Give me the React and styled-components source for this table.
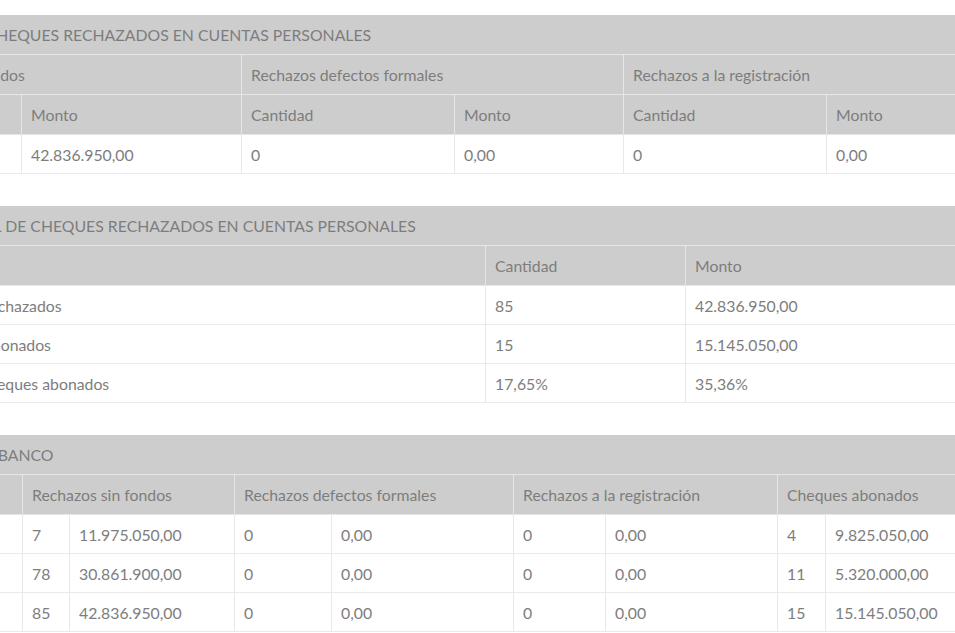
import React from "react";
import styled, { createGlobalStyle } from "styled-components";

const GlobalStyle = createGlobalStyle`
  html, body {
    margin: 0;
    padding: 0;
    background: #ffffff;
    overflow: hidden;
  }
  body {
    font-family: "Lato", "Open Sans", sans-serif;
  }
`;

// the screenshot is a crop of a wider report, so the sheet starts left of the viewport
const Sheet = styled.div`
  width: 1195px;
  margin-left: -135px;
  padding-top: 15px;
  display: flex;
  flex-direction: column;
  gap: 32px;
`;

const Table = styled.table`
  width: 100%;
  table-layout: fixed;
  border-collapse: collapse;
  font-size: 15.8px;
  color: #7d7d7d;
`;

const Col = styled.col`
  width: ${(p) => p.$w}px;
`;

const TitleCell = styled.th`
  background: #cdcdcd;
  height: 39px;
  padding: 0 9px;
  text-align: left;
  font-weight: 400;
  text-transform: uppercase;
  white-space: nowrap;
  overflow: hidden;
  border: 1px solid #e6e6e6;
  border-top: none;
`;

const HeadCell = styled.th`
  background: #cdcdcd;
  height: 39px;
  padding: 0 9px;
  text-align: left;
  font-weight: 400;
  white-space: nowrap;
  overflow: hidden;
  border: 1px solid #e6e6e6;
`;

const Cell = styled.td`
  background: #ffffff;
  height: 38px;
  padding: 0 9px;
  white-space: nowrap;
  overflow: hidden;
  border: 1px solid #e9e9e9;
`;

const Report = ({ cols, title, heads, rows }) => (
  <Table>
    <colgroup>
      {cols.map((w, i) => (
        <Col key={i} $w={w} />
      ))}
    </colgroup>
    <thead>
      <tr>
        <TitleCell colSpan={cols.length}>{title}</TitleCell>
      </tr>
      {heads.map((row, r) => (
        <tr key={r}>
          {row.map(([label, span], i) => (
            <HeadCell key={i} colSpan={span || 1}>
              {label}
            </HeadCell>
          ))}
        </tr>
      ))}
    </thead>
    <tbody>
      {rows.map((row, r) => (
        <tr key={r}>
          {row.map((v, i) => (
            <Cell key={i}>{v}</Cell>
          ))}
        </tr>
      ))}
    </tbody>
  </Table>
);

const cuentas = {
  cols: [156, 220, 213, 169, 203, 234],
  title: "Cantidad de cheques rechazados en cuentas personales",
  heads: [
    [
      ["Rechazos - sin fondos", 2],
      ["Rechazos defectos formales", 2],
      ["Rechazos a la registración", 2],
    ],
    [["Cantidad"], ["Monto"], ["Cantidad"], ["Monto"], ["Cantidad"], ["Monto"]],
  ],
  rows: [["85", "42.836.950,00", "0", "0,00", "0", "0,00"]],
};

const total = {
  cols: [620, 200, 375],
  title: "Resumen total de cheques rechazados en cuentas personales",
  heads: [[[""], ["Cantidad"], ["Monto"]]],
  rows: [
    ["Total - cheques rechazados", "85", "42.836.950,00"],
    ["Total - cheques abonados", "15", "15.145.050,00"],
    ["Porcentajes de cheques abonados", "17,65%", "35,36%"],
  ],
};

const bancos = {
  cols: [157, 47, 165, 97, 182, 92, 172, 48, 235],
  title: "Rechazos por banco",
  heads: [
    [
      [""],
      ["Rechazos sin fondos", 2],
      ["Rechazos defectos formales", 2],
      ["Rechazos a la registración", 2],
      ["Cheques abonados", 2],
    ],
  ],
  rows: [
    ["Banco A", "7", "11.975.050,00", "0", "0,00", "0", "0,00", "4", "9.825.050,00"],
    ["Banco B", "78", "30.861.900,00", "0", "0,00", "0", "0,00", "11", "5.320.000,00"],
    ["Total", "85", "42.836.950,00", "0", "0,00", "0", "0,00", "15", "15.145.050,00"],
  ],
};

export default function App() {
  return (
    <>
      <GlobalStyle />
      <Sheet>
        <Report {...cuentas} />
        <Report {...total} />
        <Report {...bancos} />
      </Sheet>
    </>
  );
}
